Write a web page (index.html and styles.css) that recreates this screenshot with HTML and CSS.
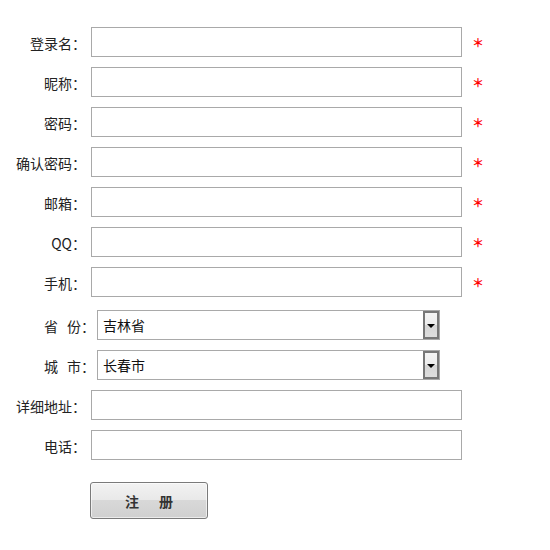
FILE: index.html
```html
<!DOCTYPE html>
<html lang="zh-CN">
<head>
<meta charset="utf-8">
<title>注册</title>
<link rel="stylesheet" href="styles.css">
</head>
<body>
<form class="reg-form">
  <div class="row">
    <label class="label">登录名：</label>
    <input class="field" type="text">
    <span class="req">＊</span>
  </div>
  <div class="row">
    <label class="label">昵称：</label>
    <input class="field" type="text">
    <span class="req">＊</span>
  </div>
  <div class="row">
    <label class="label">密码：</label>
    <input class="field" type="password">
    <span class="req">＊</span>
  </div>
  <div class="row">
    <label class="label">确认密码：</label>
    <input class="field" type="password">
    <span class="req">＊</span>
  </div>
  <div class="row">
    <label class="label">邮箱：</label>
    <input class="field" type="text">
    <span class="req">＊</span>
  </div>
  <div class="row">
    <label class="label">QQ：</label>
    <input class="field" type="text">
    <span class="req">＊</span>
  </div>
  <div class="row">
    <label class="label">手机：</label>
    <input class="field" type="text">
    <span class="req">＊</span>
  </div>
  <div class="row row-select row-first-select">
    <label class="label label-select">省<span class="sp"></span>份：</label>
    <div class="select-wrap">
      <select class="select"><option>吉林省</option></select>
      <span class="arrow-btn"><span class="tri"></span></span>
    </div>
  </div>
  <div class="row row-select">
    <label class="label label-select">城<span class="sp"></span>市：</label>
    <div class="select-wrap">
      <select class="select"><option>长春市</option></select>
      <span class="arrow-btn"><span class="tri"></span></span>
    </div>
  </div>
  <div class="row">
    <label class="label">详细地址：</label>
    <input class="field" type="text">
  </div>
  <div class="row">
    <label class="label">电话：</label>
    <input class="field" type="text">
  </div>
  <div class="actions">
    <button class="btn" type="button"><span>注</span><span>册</span></button>
  </div>
</form>
</body>
</html>
```

FILE: styles.css
```css
html, body {
  margin: 0;
  padding: 0;
  background: #fff;
}

body {
  font-family: "Noto Sans CJK SC", "Liberation Sans", sans-serif;
  font-size: 14px;
  color: #222;
}

.reg-form {
  padding-top: 27px;
}

.row {
  display: flex;
  align-items: flex-start;
  height: 40px;
}

.row-first-select {
  margin-top: 3px;
}

.label {
  width: 86px;
  text-align: right;
  line-height: 30px;
  padding-top: 1px;
  box-sizing: border-box;
  white-space: nowrap;
  color: #222;
}

.label-select {
  width: 95px;
}

.sp {
  display: inline-block;
  width: 9px;
}

.field {
  margin: 0 0 0 5px;
  width: 371px;
  height: 30px;
  box-sizing: border-box;
  border: 1px solid #a9a9a9;
  padding: 0 4px;
  font: inherit;
  background: #fff;
  outline: none;
}

.req {
  margin-left: 10px;
  color: #ff0000;
  font-size: 12px;
  font-weight: bold;
  line-height: 30px;
  padding-top: 1px;
}

.select-wrap {
  position: relative;
  margin-left: 2px;
  width: 343px;
  height: 30px;
}

.select {
  -webkit-appearance: none;
  appearance: none;
  width: 100%;
  height: 30px;
  box-sizing: border-box;
  border: 1px solid #a9a9a9;
  border-radius: 0;
  background: #fff;
  padding: 0 0 0 5px;
  font: inherit;
  color: #111;
  outline: none;
}

.arrow-btn {
  position: absolute;
  right: 1px;
  top: 1px;
  width: 16px;
  height: 28px;
  box-sizing: border-box;
  border: 2px solid #777;
  background: linear-gradient(to bottom, #f4f4f4 0%, #ececec 50%, #d6d6d6 51%, #dedede 100%);
  display: flex;
  align-items: center;
  justify-content: center;
  pointer-events: none;
}

.tri {
  width: 0;
  height: 0;
  border-left: 4px solid transparent;
  border-right: 4px solid transparent;
  border-top: 4px solid #000;
  margin-top: 1px;
}

.actions {
  padding: 12px 0 0 90px;
}

.btn {
  width: 118px;
  height: 37px;
  box-sizing: border-box;
  border: 1px solid #7a7a7a;
  border-radius: 3px;
  background: linear-gradient(to bottom, #f2f2f2 0%, #e9e9e9 48%, #d8d8d8 50%, #d0d0d0 100%);
  box-shadow: inset 0 0 0 1px rgba(255, 255, 255, 0.6);
  display: flex;
  align-items: center;
  justify-content: center;
  gap: 20px;
  padding: 0;
  font-family: "Noto Sans CJK SC", sans-serif;
  font-size: 14px;
  font-weight: bold;
  color: #333;
  cursor: pointer;
}
```
